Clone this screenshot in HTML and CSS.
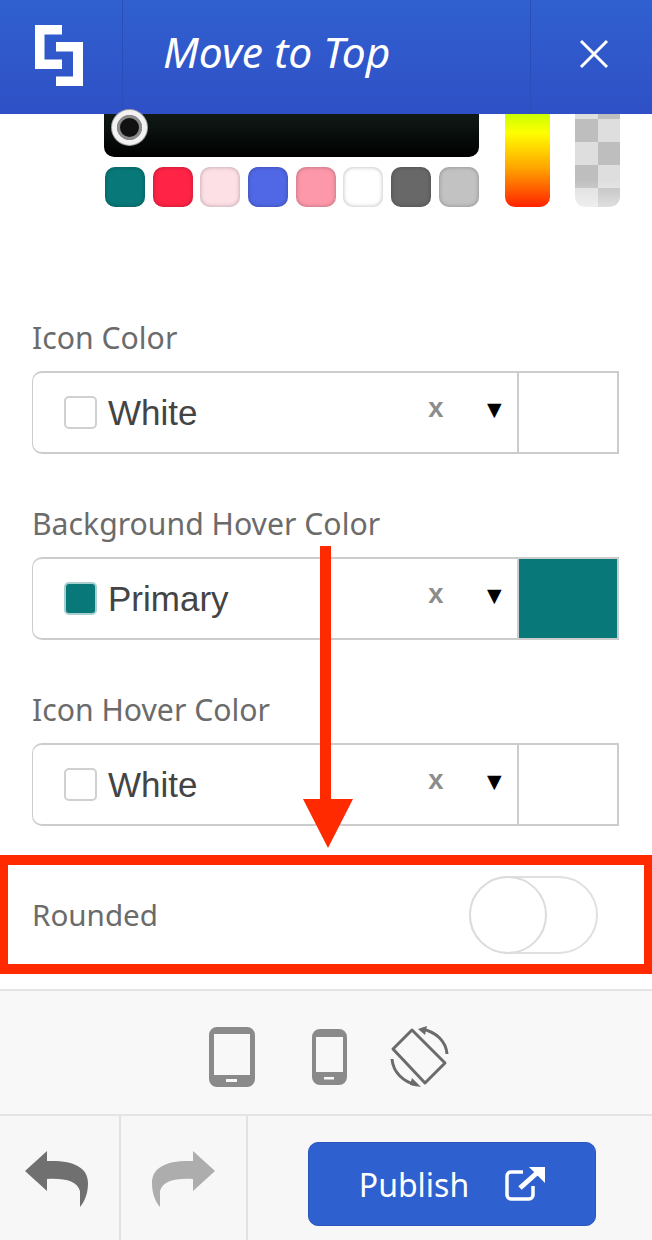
FILE: index.html
```html
<!DOCTYPE html>
<html lang="en">
<head>
    <meta charset="UTF-8">
    <meta name="viewport" content="width=device-width, initial-scale=1.0">
    <title>Move to Top</title>
    <link rel="stylesheet" href="styles.css">
</head>
<body>
    <div class="panel">
        <header class="topbar">
            <div class="logo-cell">
                <svg class="logo" width="48" height="62" viewBox="0 0 48 62">
                    <path fill="#fff" d="M0 0H27V9.500H9.500V34.500H27V44H0Z"/>
                    <path fill="#fff" d="M21 17H48V61H21V51.500H38V26.500H21Z"/>
                </svg>
            </div>
            <h1 class="title">Move to Top</h1>
            <div class="close-cell">
                <svg width="32" height="32" viewBox="0 0 32 32">
                    <path stroke="#fff" stroke-width="3" d="M3 3L29 29M29 3L3 29"/>
                </svg>
            </div>
        </header>

        <!-- color picker, scrolled under the header -->
        <section class="picker">
            <div class="picker-left">
                <div class="picker-area"><span class="picker-handle"></span></div>
                <div class="swatches">
                    <span class="swatch swatch-primary"></span>
                    <span class="swatch swatch-red"></span>
                    <span class="swatch swatch-blush"></span>
                    <span class="swatch swatch-blue"></span>
                    <span class="swatch swatch-pink"></span>
                    <span class="swatch swatch-white"></span>
                    <span class="swatch swatch-dark"></span>
                    <span class="swatch swatch-grey"></span>
                </div>
            </div>
            <div class="hue-strip"></div>
            <div class="alpha-strip"></div>
        </section>

        <section class="fields">
            <div class="form-group">
                <label>Icon Color</label>
                <div class="color-select">
                    <div class="select-main">
                        <span class="chip"></span>
                        <span class="select-text">White</span>
                        <span class="clear">x</span>
                        <span class="caret">&#9660;</span>
                    </div>
                    <div class="preview"></div>
                </div>
            </div>
            <div class="form-group">
                <label>Background Hover Color</label>
                <div class="color-select">
                    <div class="select-main">
                        <span class="chip chip-primary"></span>
                        <span class="select-text">Primary</span>
                        <span class="clear">x</span>
                        <span class="caret">&#9660;</span>
                    </div>
                    <div class="preview preview-primary"></div>
                </div>
            </div>
            <div class="form-group">
                <label>Icon Hover Color</label>
                <div class="color-select">
                    <div class="select-main">
                        <span class="chip"></span>
                        <span class="select-text">White</span>
                        <span class="clear">x</span>
                        <span class="caret">&#9660;</span>
                    </div>
                    <div class="preview"></div>
                </div>
            </div>
        </section>

        <div class="rounded-row">
            <span class="rounded-label">Rounded</span>
            <span class="toggle"><span class="toggle-knob"></span></span>
        </div>

        <div class="devices">
            <svg class="tablet" width="46" height="60" viewBox="0 0 46 60">
                <path fill="#8a8a8a" fill-rule="evenodd" d="M8 0H38A8 8 0 0 1 46 8V52A8 8 0 0 1 38 60H8A8 8 0 0 1 0 52V8A8 8 0 0 1 8 0ZM5 7V48H41V7ZM17 52V55H28V52Z"/>
            </svg>
            <svg class="phone" width="35" height="56" viewBox="0 0 35 56">
                <path fill="#8a8a8a" fill-rule="evenodd" d="M8 0H27A8 8 0 0 1 35 8V48A8 8 0 0 1 27 56H8A8 8 0 0 1 0 48V8A8 8 0 0 1 8 0ZM4 8V43H31V8ZM12 48V50.500H22V48Z"/>
            </svg>
            <svg class="rotate" width="60" height="62" viewBox="0 0 60 62" fill="none" stroke="#6b6b6b">
                <path stroke-width="3" stroke-linejoin="round" d="M22 4L55 37L35 57L3 23Z"/>
                <path stroke-width="3" d="M32 3C46 6 56 15 57 28"/>
                <path stroke-width="3" d="M2 33C3 46 13 56 27 59"/>
                <path fill="#6b6b6b" stroke="none" d="M28 3L37 0L35 9Z"/>
                <path fill="#6b6b6b" stroke="none" d="M31 61L20 59L22 52Z"/>
            </svg>
        </div>

        <footer class="actions">
            <button class="history-btn history-undo">
                <svg width="63" height="56" viewBox="0 0 63 56">
                    <path fill="#707070" d="M22 0L0 20L22 40V28C40 27 52 30 55 40V56C60 50 63 42 63 32C63 16 48 9 22 10Z"/>
                </svg>
            </button>
            <button class="history-btn history-redo">
                <svg width="63" height="56" viewBox="0 0 63 56">
                    <path fill="#adadad" d="M41 0L63 20L41 40V28C23 27 11 30 8 40V56C3 50 0 42 0 32C0 16 15 9 41 10Z"/>
                </svg>
            </button>
            <div class="publish-wrap">
                <button class="publish">
                    <span>Publish</span>
                    <svg width="40" height="36" viewBox="0 0 40 36" fill="none" stroke="#fff">
                        <path stroke-width="3.500" d="M18 6H6A4 4 0 0 0 2 10V29A4 4 0 0 0 6 33H24A4 4 0 0 0 28 29V20"/>
                        <path stroke-width="5" d="M15 22L33 6"/>
                        <path fill="#fff" stroke="none" d="M24 1H40V17Z"/>
                    </svg>
                </button>
            </div>
        </footer>

        <!-- annotation drawn over the screenshot -->
        <div class="mark-box"></div>
        <svg class="mark-arrow" width="50" height="303" viewBox="0 0 50 303">
            <path fill="#ff2a00" d="M17 0H28V253H50L25 302L0 253H17Z"/>
        </svg>
    </div>
</body>
</html>
```

FILE: styles.css
```css
* {
    box-sizing: border-box;
}

body {
    margin: 0;
    font-family: 'Noto Sans', 'Liberation Sans', sans-serif;
    color: #6b6b6b;
    background: #fff;
}

.panel {
    position: relative;
    width: 652px;
    height: 1240px;
    overflow: hidden;
}

.topbar {
    display: flex;
    height: 114px;
    background: linear-gradient(#3060d0, #2f50c6);
}

.logo-cell {
    width: 123px;
    padding: 25px 0 0 35px;
    border-right: 1px solid #2a4db8;
}

.title {
    flex: 1;
    margin: 0;
    padding: 23px 0 0 40px;
    font-size: 42.6px;
    line-height: 56px;
    font-weight: 400;
    font-style: italic;
    color: #fff;
}

.close-cell {
    width: 122px;
    padding: 38px 0 0 47px;
    border-left: 1px solid #2a4db8;
}

.picker {
    display: flex;
    height: 93px;
    padding-left: 104px;
}

.picker-area {
    position: relative;
    width: 375px;
    height: 43px;
    border-radius: 0 0 10px 10px;
    background: linear-gradient(#101a16, #000);
}

.picker-handle {
    position: absolute;
    left: 8px;
    top: -4px;
    width: 35px;
    height: 35px;
    border: 5px solid #f2f2f2;
    border-radius: 50%;
    background: #111;
    box-shadow: 0 0 0 1px #a0a0a0, inset 0 0 0 3px #8a8a8a;
}

.swatches {
    display: flex;
    gap: 7.7px;
    margin: 10px 0 0 1px;
}

.swatch {
    width: 40px;
    height: 40px;
    border-radius: 10px;
    box-shadow: inset 0 0 4px rgba(0, 0, 0, 0.3);
}

.swatch-primary { background: #087878; }
.swatch-red { background: #ff2346; }
.swatch-blush { background: #fddfe6; }
.swatch-blue { background: #5068e6; }
.swatch-pink { background: #fc98a9; }
.swatch-white { background: #fff; }
.swatch-dark { background: #686868; }
.swatch-grey { background: #c2c2c2; }

.hue-strip {
    width: 45px;
    height: 93px;
    margin-left: 26px;
    border-radius: 0 0 10px 10px;
    background: linear-gradient(#c8ff00 0, #ffff00 20%, #ffa500 58%, #ff2200 100%);
}

.alpha-strip {
    width: 45px;
    height: 93px;
    margin-left: 25px;
    border-radius: 0 0 10px 10px;
    background-color: #e4e4e4;
    background-image: linear-gradient(transparent 70%, rgba(255, 255, 255, 0.5)), conic-gradient(#dedede 25%, #bebebe 0 50%, #dedede 0 75%, #bebebe 0);
    background-size: 100% 100%, 46px 46px;
    background-position: 0 0, 0 5px;
}

.fields {
    padding: 0 33px 0 32px;
}

.form-group {
    margin-top: 45px;
}

.form-group:first-child {
    margin-top: 106px;
}

label {
    display: block;
    height: 50px;
    margin-bottom: 8px;
    font-size: 30.2px;
    line-height: 50px;
    color: #6b6b6b;
}

.color-select {
    display: flex;
    height: 83px;
    border: 2px solid #cccccc;
    border-left-width: 1px;
    border-radius: 10px 0 0 10px;
}

.select-main {
    display: flex;
    align-items: center;
    flex: 1;
    padding-left: 31px;
}

.chip {
    width: 33px;
    height: 33px;
    border: 2px solid #d0d0d0;
    border-radius: 5px;
    background: #fff;
}

.chip-primary {
    background: #087878;
    border-color: #a8d0d0;
}

.select-text {
    flex: 1;
    margin-left: 11px;
    font-family: 'Liberation Sans', sans-serif;
    font-size: 35px;
    color: #444;
}

.clear {
    margin: -6px 43px 0 0;
    font-family: 'Liberation Mono', monospace;
    font-weight: 700;
    font-size: 27px;
    color: #8c8c8c;
}

.caret {
    width: 30px;
    margin-top: -8px;
    font-family: 'DejaVu Sans', sans-serif;
    font-size: 19px;
    color: #000;
}

.preview {
    width: 100px;
    border-left: 2px solid #ccc;
}

.preview-primary {
    background: #087878;
}

.rounded-row {
    display: flex;
    align-items: center;
    justify-content: space-between;
    height: 99px;
    margin-top: 39px;
    padding: 0 54px 0 32px;
}

.rounded-label {
    font-size: 29.6px;
}

.toggle {
    display: block;
    width: 129px;
    height: 78px;
    border: 2px solid #e0e0e0;
    border-radius: 39px;
    background: #fff;
}

.toggle-knob {
    display: block;
    width: 78px;
    height: 78px;
    margin: -2px;
    border: 2px solid #dcdcdc;
    border-radius: 50%;
    background: #fff;
}

.devices {
    display: flex;
    align-items: center;
    height: 127px;
    margin-top: 25px;
    padding: 8px 0 0 209px;
    background: #f8f8f8;
    border-top: 2px solid #e4e4e4;
    border-bottom: 2px solid #e4e4e4;
}

.phone {
    margin-left: 57px;
}

.rotate {
    margin-left: 43px;
}

.actions {
    display: flex;
    height: 124px;
    background: #f7f7f7;
}

.history-btn {
    display: flex;
    padding: 35px 0 0;
    border: 0;
    background: none;
}

.history-undo {
    width: 121px;
    padding-left: 25px;
    border-right: 2px solid #e2e2e2;
}

.history-redo {
    width: 127px;
    padding-left: 31px;
    border-right: 2px solid #e2e2e2;
}

.publish-wrap {
    flex: 1;
    padding: 26px 56px 14px 60px;
}

.publish {
    display: flex;
    align-items: center;
    justify-content: center;
    gap: 36px;
    width: 100%;
    height: 84px;
    border: 1px solid #2a56bb;
    border-radius: 10px;
    background: #2f60cf;
    font-family: 'Noto Sans', sans-serif;
    font-size: 32px;
    color: #fff;
}

.mark-box {
    position: absolute;
    left: 0;
    top: 855px;
    width: 652px;
    height: 119px;
    border: 10px solid #ff2a00;
    border-left-width: 8px;
    border-right-width: 8px;
}

.mark-arrow {
    position: absolute;
    left: 303px;
    top: 546px;
}
```
